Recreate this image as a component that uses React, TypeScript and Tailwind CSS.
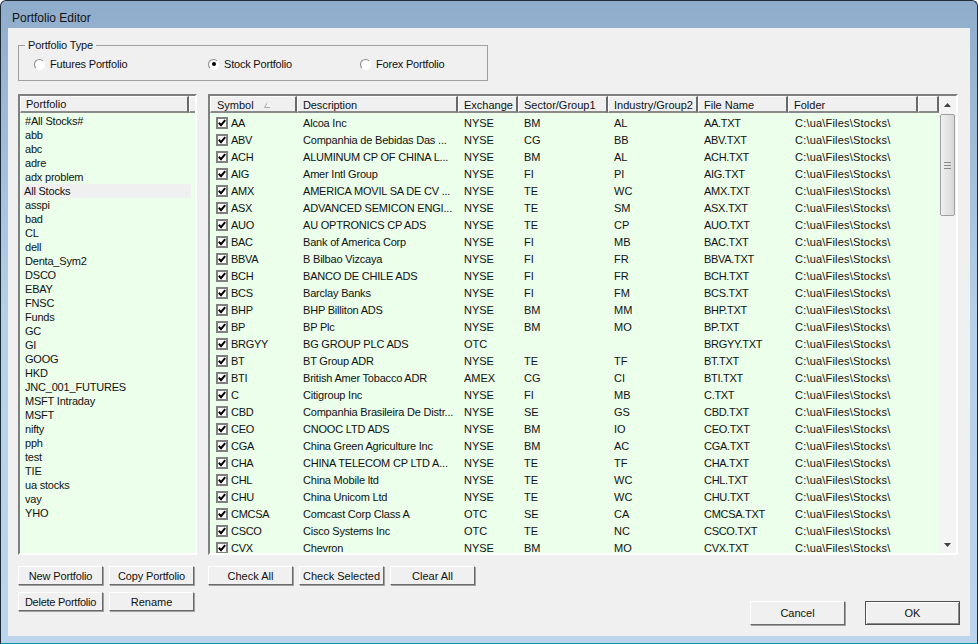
const stocks: string[][] = [
  ["AA", "Alcoa Inc", "NYSE", "BM", "AL"],
  ["ABV", "Companhia de Bebidas Das ...", "NYSE", "CG", "BB"],
  ["ACH", "ALUMINUM CP OF CHINA L...", "NYSE", "BM", "AL"],
  ["AIG", "Amer Intl Group", "NYSE", "FI", "PI"],
  ["AMX", "AMERICA MOVIL SA DE CV ...", "NYSE", "TE", "WC"],
  ["ASX", "ADVANCED SEMICON ENGI...", "NYSE", "TE", "SM"],
  ["AUO", "AU OPTRONICS CP ADS", "NYSE", "TE", "CP"],
  ["BAC", "Bank of America Corp", "NYSE", "FI", "MB"],
  ["BBVA", "B Bilbao Vizcaya", "NYSE", "FI", "FR"],
  ["BCH", "BANCO DE CHILE ADS", "NYSE", "FI", "FR"],
  ["BCS", "Barclay Banks", "NYSE", "FI", "FM"],
  ["BHP", "BHP Billiton ADS", "NYSE", "BM", "MM"],
  ["BP", "BP Plc", "NYSE", "BM", "MO"],
  ["BRGYY", "BG GROUP PLC ADS", "OTC", "", ""],
  ["BT", "BT Group ADR", "NYSE", "TE", "TF"],
  ["BTI", "British Amer Tobacco ADR", "AMEX", "CG", "CI"],
  ["C", "Citigroup Inc", "NYSE", "FI", "MB"],
  ["CBD", "Companhia Brasileira De Distr...", "NYSE", "SE", "GS"],
  ["CEO", "CNOOC LTD ADS", "NYSE", "BM", "IO"],
  ["CGA", "China Green Agriculture Inc", "NYSE", "BM", "AC"],
  ["CHA", "CHINA TELECOM CP LTD A...", "NYSE", "TE", "TF"],
  ["CHL", "China Mobile ltd", "NYSE", "TE", "WC"],
  ["CHU", "China Unicom Ltd", "NYSE", "TE", "WC"],
  ["CMCSA", "Comcast Corp Class A", "OTC", "SE", "CA"],
  ["CSCO", "Cisco Systems Inc", "OTC", "TE", "NC"],
  ["CVX", "Chevron", "NYSE", "BM", "MO"],
];

const portfolios = [
  "#All Stocks#", "abb", "abc", "adre", "adx problem", "All Stocks", "asspi", "bad", "CL", "dell",
  "Denta_Sym2", "DSCO", "EBAY", "FNSC", "Funds", "GC", "GI", "GOOG", "HKD", "JNC_001_FUTURES",
  "MSFT Intraday", "MSFT", "nifty", "pph", "test", "TIE", "ua stocks", "vay", "YHO",
];

function Radio({ label, checked, className }: { label: string; checked?: boolean; className: string }) {
  return (
    <div className={`flex items-center gap-[5px] tracking-[-0.2px] ${className}`}>
      <span className="w-[11px] h-[11px] rounded-full border border-t-[#8a8a8a] border-l-[#8a8a8a] border-r-[#ffffff] border-b-[#ffffff] bg-white flex items-center justify-center">
        {checked && <span className="w-[4px] h-[4px] rounded-full bg-black" />}
      </span>
      <span>{label}</span>
    </div>
  );
}

function Button({ label, className }: { label: string; className: string }) {
  return (
    <button className={`flex items-center justify-center bg-[#f0f0f0] border border-t-white border-l-white border-r-[#696969] border-b-[#696969] shadow-[1px_1px_0_#a0a0a0] ${className}`}>
      {label}
    </button>
  );
}

function Head({ label, className }: { label: string; className: string }) {
  return (
    <div className={`h-[17px] shrink-0 flex items-center bg-[#f0f0f0] border-r-2 border-r-[#696969] border-b-2 border-b-[#8a8a8a] border-t border-t-white border-l border-l-white ${className}`}>
      {label}
    </div>
  );
}

function Check() {
  return (
    <span className="w-[12px] h-[12px] shrink-0 border-2 border-[#7f7f7f] bg-white flex items-center justify-center">
      <svg width="8" height="8" viewBox="0 0 8 8">
        <path d="M0.8 3.8 L3 6.2 L7.2 1.2" fill="none" stroke="#000" strokeWidth="2" />
      </svg>
    </span>
  );
}

function Row({ s }: { s: string[] }) {
  return (
    <div className="h-[17px] shrink-0 flex items-center bg-[#ebffeb]">
      <div className="w-[92px] pl-[6px] flex items-center gap-[3px] shrink-0 tracking-[-0.3px]">
        <Check />
        <span>{s[0]}</span>
      </div>
      <div className="w-[162px] pl-[1px] shrink-0 whitespace-nowrap tracking-[-0.2px]">{s[1]}</div>
      <div className="w-[60px] shrink-0">{s[2]}</div>
      <div className="w-[90px] shrink-0">{s[3]}</div>
      <div className="w-[90px] shrink-0">{s[4]}</div>
      <div className="w-[91px] shrink-0 tracking-[-0.3px]">{s[0]}.TXT</div>
      <div className="shrink-0 whitespace-nowrap tracking-[0.2px]">C:\ua\Files\Stocks\</div>
    </div>
  );
}

export default function App() {
  return (
    <div className="w-[978px] h-[644px] overflow-hidden rounded-t-[6px] border border-[#1c2b38] border-b-[#0e8fb5] pt-[27px] px-[7px] pb-[6px] bg-gradient-to-b from-[#8fadcb] via-[#b6d0e9] to-[#bcd5ec] relative text-[11px] leading-[14px] text-[#111] font-['Liberation_Sans',Arial,sans-serif]">
      <div className="absolute left-[11px] top-[9px] text-[12px] leading-[16px]">Portfolio Editor</div>
      <div className="w-[962px] h-[608px] bg-[#f0f0f0] flex flex-col pl-[10px]">
        <fieldset className="w-[470px] h-[43px] mt-[10px] border border-[#a0a0a0] pl-[6px] m-0">
          <legend className="px-[3px] tracking-[-0.15px] leading-[14px]">Portfolio Type</legend>
          <div className="flex items-center mt-[1px] h-[22px]">
            <Radio label="Futures Portfolio" className="w-[183px] pl-[9px]" />
            <Radio label="Stock Portfolio" checked className="w-[152px]" />
            <Radio label="Forex Portfolio" className="" />
          </div>
        </fieldset>

        <div className="flex mt-[13px] h-[461px]">
          <div className="w-[179px] h-[461px] border-2 border-t-[#7f7f7f] border-l-[#7f7f7f] border-r-white border-b-white bg-[#ebffeb] overflow-hidden shrink-0">
            <div className="flex">
              <Head label="Portfolio" className="w-[169px] pl-[5px]" />
              <Head label="" className="w-[8px]" />
            </div>
            <div className="pt-[1px] tracking-[-0.2px]">
              {portfolios.map((p) => (
                <div key={p} className={`h-[14px] w-[169px] ml-[2px] whitespace-nowrap ${p === "All Stocks" ? "bg-[#f0f0f0] pl-[2px]" : "pl-[3px]"}`}>
                  {p}
                </div>
              ))}
            </div>
          </div>

          <div className="w-[750px] h-[461px] ml-[11px] border-2 border-t-[#7f7f7f] border-l-[#7f7f7f] border-r-white border-b-white bg-[#ebffeb] overflow-hidden flex shrink-0">
            <div className="w-[729px] shrink-0 overflow-hidden flex flex-col">
              <div className="flex shrink-0">
                <div className="w-[87px] h-[17px] shrink-0 flex items-center bg-[#f0f0f0] border-r-2 border-r-[#696969] border-b-2 border-b-[#8a8a8a] border-t border-t-white border-l border-l-white pl-[6px] pt-px justify-between pr-[24px]">
                  <span>Symbol</span>
                  <svg width="7" height="6" viewBox="0 0 7 6">
                    <path d="M3.5 0.5 L0.5 5.5 H6.5" fill="none" stroke="#a8a8a8" />
                    <path d="M3.5 0.5 L6.5 5.5" fill="none" stroke="#ffffff" />
                  </svg>
                </div>
                <Head label="Description" className="w-[161px] pl-[5px] pt-px tracking-[-0.1px]" />
                <Head label="Exchange" className="w-[60px] pl-[5px] pt-px" />
                <Head label="Sector/Group1" className="w-[90px] pl-[5px] pt-px" />
                <Head label="Industry/Group2" className="w-[90px] pl-[5px] pt-px" />
                <Head label="File Name" className="w-[90px] pl-[5px] pt-px" />
                <Head label="Folder" className="w-[130px] pl-[5px] pt-px" />
                <Head label="" className="w-[21px]" />
              </div>
              <div className="flex flex-col overflow-hidden pt-px h-[440px]">
                {stocks.map((s) => (
                  <Row key={s[0]} s={s} />
                ))}
              </div>
            </div>

            <div className="w-[17px] shrink-0 bg-[#f4f4f4] flex flex-col">
              <div className="h-[18px] flex items-center justify-center shrink-0">
                <svg width="7" height="4" viewBox="0 0 7 4"><path d="M3.5 0 L7 4 H0 Z" fill="#404040" /></svg>
              </div>
              <div className="h-[102px] mx-[1px] rounded-[2px] border border-[#a0a0a0] bg-gradient-to-r from-[#f0f0f0] to-[#d8d8d8] flex items-center justify-center shrink-0">
                <div className="w-[7px] h-[7px] border-y border-[#8a8a8a] flex items-center">
                  <div className="w-full h-px bg-[#8a8a8a]" />
                </div>
              </div>
              <div className="mt-auto h-[17px] flex items-center justify-center shrink-0">
                <svg width="7" height="4" viewBox="0 0 7 4"><path d="M0 0 H7 L3.5 4 Z" fill="#404040" /></svg>
              </div>
            </div>
          </div>
        </div>

        <div className="flex mt-[11px]">
          <div className="grid grid-cols-[85px_85px] grid-rows-[19px_19px] gap-x-[6px] gap-y-[7px]">
            <Button label="New Portfolio" className="tracking-[-0.15px]" />
            <Button label="Copy Portfolio" className="tracking-[-0.15px]" />
            <Button label="Delete Portfolio" className="tracking-[-0.25px]" />
            <Button label="Rename" className="" />
          </div>
          <div className="flex gap-[6px] ml-[14px] h-[19px]">
            <Button label="Check All" className="w-[85px]" />
            <Button label="Check Selected" className="w-[85px]" />
            <Button label="Clear All" className="w-[85px]" />
          </div>
          <div className="flex gap-[20px] ml-[275px] mt-[35px] h-[24px]">
            <Button label="Cancel" className="w-[95px]" />
            <button className="w-[95px] flex items-center justify-center bg-[#f0f0f0] border border-[#505050] shadow-[inset_1px_1px_0_#ffffff,inset_-1px_-1px_0_#8a8a8a]">
              OK
            </button>
          </div>
        </div>
      </div>
    </div>
  );
}
